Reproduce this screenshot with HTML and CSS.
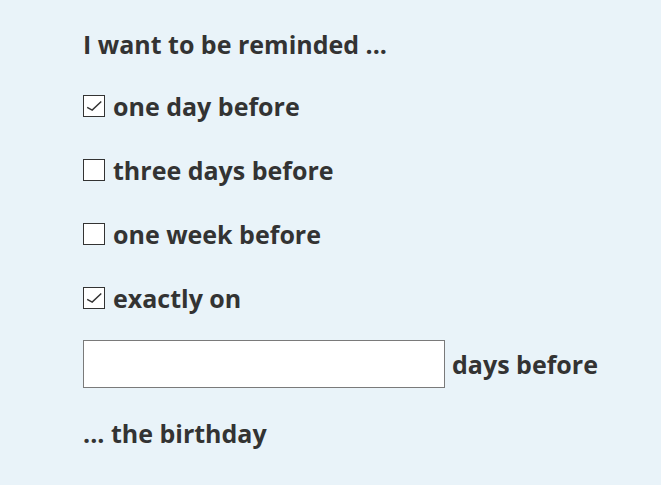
FILE: index.html
```html
<!DOCTYPE html>
<html>
<head>
<meta charset="utf-8">
<link rel="stylesheet" href="styles.css">
</head>
<body>
<form class="reminder">
  <p class="line heading">I want to be reminded ...</p>
  <div class="options">
    <label class="line option">
      <span class="box checked"><svg viewBox="0 0 22 22" width="20" height="20"><polyline points="3.5,12.5 9,15.5 19,6" fill="none" stroke="#333" stroke-width="1.6"/></svg></span>
      one day before
    </label>
    <label class="line option">
      <span class="box"></span>
      three days before
    </label>
    <label class="line option">
      <span class="box"></span>
      one week before
    </label>
    <label class="line option">
      <span class="box checked"><svg viewBox="0 0 22 22" width="20" height="20"><polyline points="3.5,12.5 9,15.5 19,6" fill="none" stroke="#333" stroke-width="1.6"/></svg></span>
      exactly on
    </label>
  </div>
  <div class="days">
    <span class="field"></span>
    <span class="days-label">days before</span>
  </div>
  <p class="line footer">... the birthday</p>
</form>
</body>
</html>
```
FILE: styles.css
```css
html, body {
  margin: 0;
  padding: 0;
  background: #e9f3f9;
  height: 100%;
}
body {
  font-family: "Open Sans", "Noto Sans", sans-serif;
  font-weight: 700;
  font-size: 25px;
  color: #333333;
}
.reminder {
  display: flex;
  flex-direction: column;
  padding: 29px 0 0 83px;
}
.line {
  margin: 0;
  height: 30px;
  line-height: 30px;
  display: flex;
  align-items: center;
}
.options {
  display: flex;
  flex-direction: column;
  gap: 34px;
  margin-top: 32px;
}
.option {
  gap: 8px;
}
.box {
  width: 20px;
  height: 20px;
  border: 1px solid #333;
  background: #fff;
  flex: none;
  display: block;
}
.box svg {
  display: block;
}
.days {
  display: flex;
  align-items: center;
  gap: 7px;
  margin-top: 27px;
}
.field {
  width: 360px;
  height: 46px;
  border: 1px solid #7a7a7a;
  background: #fff;
  display: block;
}
.footer {
  margin-top: 30px;
}
```
